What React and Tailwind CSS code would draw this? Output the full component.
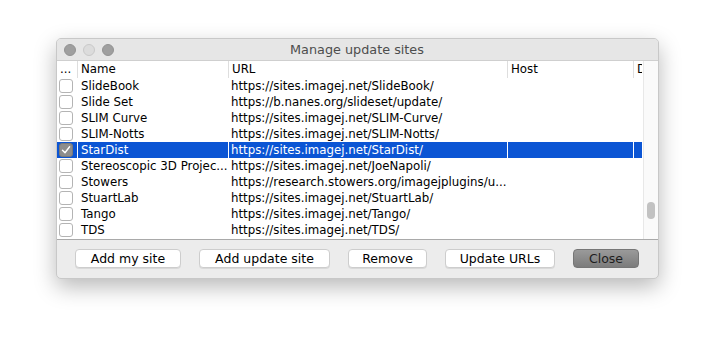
const ROWS = [
  { name: 'SlideBook', url: 'https://sites.imagej.net/SlideBook/' },
  { name: 'Slide Set', url: 'https://b.nanes.org/slideset/update/' },
  { name: 'SLIM Curve', url: 'https://sites.imagej.net/SLIM-Curve/' },
  { name: 'SLIM-Notts', url: 'https://sites.imagej.net/SLIM-Notts/' },
  { name: 'StarDist', url: 'https://sites.imagej.net/StarDist/', checked: true },
  { name: 'Stereoscopic 3D Projec...', url: 'https://sites.imagej.net/JoeNapoli/' },
  { name: 'Stowers', url: 'https://research.stowers.org/imagejplugins/u...' },
  { name: 'StuartLab', url: 'https://sites.imagej.net/StuartLab/' },
  { name: 'Tango', url: 'https://sites.imagej.net/Tango/' },
  { name: 'TDS', url: 'https://sites.imagej.net/TDS/' },
];

const BUTTONS = [
  { label: 'Add my site', w: 'w-[106px]' },
  { label: 'Add update site', w: 'w-[131px]' },
  { label: 'Remove', w: 'w-[79px]' },
  { label: 'Update URLs', w: 'w-[110px]' },
];

const font = { fontFamily: '"DejaVu Sans", "Noto Sans", sans-serif' };

const Checkbox = ({ checked }) =>
  checked ? (
    <div className="w-[14px] h-[14px] rounded-[3px] bg-[#8d8d8d] border border-[#7a7a7a] flex items-center justify-center">
      <svg width="10" height="10" viewBox="0 0 10 10">
        <path d="M1.5 5.2 L4 7.8 L8.6 1.8" fill="none" stroke="#fff" strokeWidth="1.4" strokeLinecap="round" strokeLinejoin="round" />
      </svg>
    </div>
  ) : (
    <div className="w-[14px] h-[14px] rounded-[3px] bg-white border border-[#b4b4b4]" />
  );

const Row = ({ row }) => {
  const sel = row.checked;
  const cell = sel ? 'bg-[#0b55d4] text-white' : 'text-black';
  return (
    <div className="flex h-[16px] text-[11.8px] leading-[16px]">
      <div className={`w-[20px] shrink-0 flex items-center pl-[2px] ${sel ? 'bg-[#0b55d4]' : ''}`}>
        <Checkbox checked={sel} />
      </div>
      <div className={`w-[150px] shrink-0 pl-[3px] ml-[1px] whitespace-nowrap overflow-hidden ${cell}`}>{row.name}</div>
      <div className={`w-[278px] shrink-0 pl-[2px] ml-[1px] whitespace-nowrap overflow-hidden ${cell}`}>{row.url}</div>
      <div className={`w-[125px] shrink-0 ml-[1px] ${cell}`} />
      <div className={`w-[8px] shrink-0 ml-[1px] ${cell}`} />
    </div>
  );
};

export default function App() {
  return (
    <div className="w-[715px] h-[354px] bg-white pt-[38px] pl-[56px]" style={font}>
      <div className="w-[603px] h-[241px] bg-[#ececec] rounded-[5px] border border-[#c8c8c8] shadow-[0_8px_22px_rgba(0,0,0,0.28)] flex flex-col overflow-hidden">
        {/* title bar */}
        <div className="h-[22px] shrink-0 flex items-center bg-[#e6e6e6] border-b border-[#cfcfcf]">
          <div className="flex gap-[7px] pl-[7px]">
            <div className="w-[12px] h-[12px] rounded-full bg-[#9f9f9f] border border-[#939393]" />
            <div className="w-[12px] h-[12px] rounded-full bg-[#dcdcdc] border border-[#c9c9c9]" />
            <div className="w-[12px] h-[12px] rounded-full bg-[#9f9f9f] border border-[#939393]" />
          </div>
          <div className="flex-1 text-center text-[12.8px] text-[#4d4d4d] pr-[58px]">Manage update sites</div>
        </div>

        {/* table */}
        <div className="h-[179px] shrink-0 bg-white border-b border-[#a9a9a9] flex overflow-hidden">
          <div className="flex-1 flex flex-col overflow-hidden">
            <div className="flex h-[17px] shrink-0 text-[11.8px] leading-[17px] text-black">
              <div className="w-[20px] shrink-0 pl-[3px]">...</div>
              <div className="w-[151px] shrink-0 pl-[3px] border-l border-[#dedede]">Name</div>
              <div className="w-[279px] shrink-0 pl-[3px] border-l border-[#dedede]">URL</div>
              <div className="w-[126px] shrink-0 pl-[3px] border-l border-[#dedede]">Host</div>
              <div className="w-[9px] shrink-0 pl-[3px] border-l border-[#dedede] overflow-hidden">D</div>
            </div>
            <div className="flex flex-col">
              {ROWS.map((r) => (
                <Row key={r.name} row={r} />
              ))}
            </div>
          </div>
          <div className="w-[15px] shrink-0 bg-[#fafafa] border-l border-[#e8e8e8] flex flex-col items-center pt-[141px]">
            <div className="w-[8px] h-[17px] rounded-full bg-[#c2c2c2]" />
          </div>
        </div>

        {/* buttons */}
        <div className="flex-1 flex items-center pl-[18px] pr-[19px] pb-[1px]">
          <div className="flex gap-[18px]">
            {BUTTONS.map((b) => (
              <div
                key={b.label}
                className={`${b.w} h-[19px] flex items-center justify-center bg-white border border-[#cdcdcd] rounded-[4px] text-[12.5px] leading-[15px] text-black whitespace-nowrap shadow-[0_1px_0_rgba(0,0,0,0.08)]`}
              >
                {b.label}
              </div>
            ))}
          </div>
          <div className="ml-auto h-[19px] w-[66px] flex items-center justify-center rounded-[4px] bg-gradient-to-b from-[#9a9a9a] to-[#7c7c7c] border border-[#767676] text-[12.5px] leading-[15px] text-[#1e1e1e]">
            Close
          </div>
        </div>
      </div>
    </div>
  );
}
